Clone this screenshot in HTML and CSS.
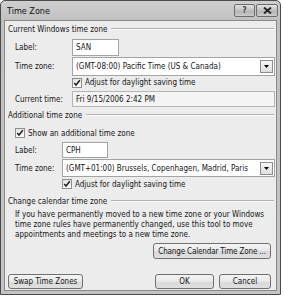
FILE: index.html
```html
<!DOCTYPE html>
<html>
<head>
<meta charset="utf-8">
<link rel="stylesheet" href="styles.css">
</head>
<body>
<div class="window">
  <div class="titlebar">
    <span class="title">Time Zone</span>
    <div class="tb-buttons">
      <span class="tb-btn help">?</span>
      <span class="tb-btn close">
        <svg width="9" height="7" viewBox="0 0 9 7"><path d="M1 0.5 L8 6.5 M8 0.5 L1 6.5" stroke="#222" stroke-width="1.8"/></svg>
      </span>
    </div>
  </div>
  <div class="client">
    <div class="group-head"><span>Current Windows time zone</span><span class="rule"></span></div>
    <div class="row r-label1">
      <span class="lbl lbl1">Label:</span>
      <span class="field w-san">SAN</span>
    </div>
    <div class="row r-tz1">
      <span class="lbl lbl1">Time zone:</span>
      <span class="field select">
        <span class="sel-text">(GMT-08:00) Pacific Time (US &amp; Canada)</span>
        <span class="arrow"><svg width="5" height="3" viewBox="0 0 5 3"><path d="M0 0 H5 L2.5 3 Z" fill="#000"/></svg></span>
      </span>
    </div>
    <div class="row check in1 r-check1">
      <span class="cb"><svg width="8" height="8" viewBox="0 0 8 8"><path d="M1.2 4 L3 6 L6.8 1.2" stroke="#222" stroke-width="1.5" fill="none"/></svg></span>
      <span>Adjust for daylight saving time</span>
    </div>
    <div class="row r-current">
      <span class="lbl lbl1">Current time:</span>
      <span class="field readonly">Fri 9/15/2006 2:42 PM</span>
    </div>

    <div class="group-head"><span>Additional time zone</span><span class="rule"></span></div>
    <div class="row check r-show">
      <span class="cb"><svg width="8" height="8" viewBox="0 0 8 8"><path d="M1.2 4 L3 6 L6.8 1.2" stroke="#222" stroke-width="1.5" fill="none"/></svg></span>
      <span>Show an additional time zone</span>
    </div>
    <div class="row r-label2">
      <span class="lbl lbl2">Label:</span>
      <span class="field w-cph">CPH</span>
    </div>
    <div class="row r-tz2">
      <span class="lbl lbl2">Time zone:</span>
      <span class="field select">
        <span class="sel-text">(GMT+01:00) Brussels, Copenhagen, Madrid, Paris</span>
        <span class="arrow"><svg width="5" height="3" viewBox="0 0 5 3"><path d="M0 0 H5 L2.5 3 Z" fill="#000"/></svg></span>
      </span>
    </div>
    <div class="row check in2 r-check2">
      <span class="cb"><svg width="8" height="8" viewBox="0 0 8 8"><path d="M1.2 4 L3 6 L6.8 1.2" stroke="#222" stroke-width="1.5" fill="none"/></svg></span>
      <span>Adjust for daylight saving time</span>
    </div>

    <div class="group-head h3"><span>Change calendar time zone</span><span class="rule"></span></div>
    <p class="para">If you have permanently moved to a new time zone or your Windows<br>time zone rules have permanently changed, use this tool to move<br>appointments and meetings to a new time zone.</p>
    <div class="change-row">
      <span class="btn btn-change">Change Calendar Time Zone ...</span>
    </div>
    <div class="bottom-row">
      <span class="btn btn-swap">Swap Time Zones</span>
      <span class="spacer"></span>
      <span class="btn btn-ok">OK</span>
      <span class="btn btn-cancel">Cancel</span>
    </div>
  </div>
</div>
</body>
</html>
```
FILE: styles.css
```css
body {
  margin: 0;
  background: #fff;
  font-family: "DejaVu Sans Condensed", "DejaVu Sans", sans-serif;
  font-stretch: condensed;
  font-size: 8px;
  color: #151515;
}

.window {
  width: 281px;
  height: 295px;
  box-sizing: border-box;
  border: 1px solid #4a4a4a;
  border-radius: 5px 5px 0 0;
  background: linear-gradient(#cfcfcf, #c0c0c0 20px, #c4c4c4);
  display: flex;
  flex-direction: column;
}

.titlebar {
  height: 19px;
  display: flex;
  align-items: center;
  padding: 0 2px 0 6px;
}

.title {
  flex: 1;
  font-size: 9px;
  color: #111;
}

.tb-buttons {
  display: flex;
  gap: 1px;
}

.tb-btn {
  width: 21px;
  height: 13px;
  box-sizing: border-box;
  border: 1px solid #6c6c6c;
  border-radius: 2px;
  background: linear-gradient(#e2e2e2, #c0c0c0 50%, #b0b0b0 51%, #cccccc);
  display: flex;
  align-items: center;
  justify-content: center;
  font-size: 8px;
  font-weight: bold;
  color: #444;
}

.tb-btn.close {
  width: 22px;
}

.client {
  flex: 1;
  margin: 0 3px 3px;
  border: 1px solid #8a8a8a;
  background: #ececec;
  display: flex;
  flex-direction: column;
  padding: 0 1px 0 3px;
}

.group-head {
  height: 16px;
  display: flex;
  align-items: center;
  white-space: nowrap;
}

.group-head .rule {
  flex: 1;
  margin-left: 4px;
  border-top: 1px solid #b2b2b2;
  border-bottom: 1px solid #fafafa;
  margin-right: 1px;
}

.group-head.h3 {
  margin-top: 2px;
}

.row {
  display: flex;
  align-items: center;
  padding-left: 7px;
  white-space: nowrap;
}

.lbl1 {
  width: 57px;
  flex: none;
}

.lbl2 {
  width: 47px;
  flex: none;
}

.field {
  box-sizing: border-box;
  border: 1px solid #a3a3a3;
  background: #fff;
  padding-left: 3px;
  display: flex;
  align-items: center;
  height: 17px;
}

.r-label1 { margin-top: 1px; height: 19px; }
.r-tz1 { height: 19px; }
.r-tz1 .field { height: 19px; }
.r-check1 { height: 13px; }
.r-current { margin-top: 2px; height: 16px; }
.r-current .field { height: 16px; }
.r-show { margin-top: 3px; height: 14px; }
.r-label2 { margin-top: 1px; height: 18px; }
.r-label2 .field { height: 16px; }
.r-tz2 { height: 18px; }
.r-tz2 .field { height: 18px; }
.r-check2 { height: 14px; }

.w-san { width: 47px; }
.w-cph { width: 46px; }

.select {
  flex: 1;
  padding-right: 1px;
}

.sel-text {
  flex: 1;
}

.arrow {
  width: 13px;
  height: 13px;
  box-sizing: border-box;
  border: 1px solid #8c8c8c;
  background: linear-gradient(#f6f6f6, #dedede);
  display: flex;
  align-items: center;
  justify-content: center;
}

.readonly {
  flex: 1;
  background: #f4f4f4;
  border-color: #b5b5b5;
}

.check.in1 { padding-left: 64px; }
.check.in2 { padding-left: 54px; }

.cb {
  width: 10px;
  height: 10px;
  box-sizing: border-box;
  border: 1px solid #8e8e8e;
  background: linear-gradient(#e4e4e4, #fbfbfb);
  margin-right: 3px;
  display: flex;
  align-items: center;
  justify-content: center;
}

.para {
  margin: 1px 0 0;
  padding-left: 7px;
  line-height: 10px;
  white-space: nowrap;
}

.change-row {
  margin-top: 3px;
  height: 16px;
  display: flex;
  justify-content: flex-end;
  padding-right: 4px;
}

.btn {
  box-sizing: border-box;
  border: 1px solid #707070;
  border-radius: 3px;
  background: linear-gradient(#f4f4f4, #e8e8e8 50%, #d8d8d8 51%, #e0e0e0);
  display: flex;
  align-items: center;
  justify-content: center;
  white-space: nowrap;
}

.btn-change {
  width: 118px;
  height: 16px;
  letter-spacing: -0.15px;
}

.bottom-row {
  margin-top: 15px;
  height: 15px;
  display: flex;
  padding-right: 4px;
}

.spacer { flex: 1; }

.btn-swap { width: 75px; }
.btn-ok { width: 59px; margin-right: 5px; }
.btn-cancel { width: 52px; }
```
